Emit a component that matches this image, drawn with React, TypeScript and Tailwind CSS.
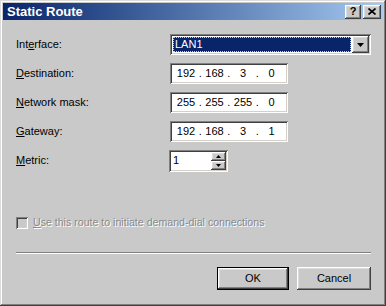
const raised =
  "shadow-[inset_-1px_-1px_#404040,inset_1px_1px_#ffffff,inset_-2px_-2px_#808080,inset_2px_2px_#dcdcdc]";
const sunken =
  "shadow-[inset_1px_1px_#808080,inset_-1px_-1px_#ffffff,inset_2px_2px_#404040,inset_-2px_-2px_#d4d0c8]";

function Label({ pre, u, post }: { pre?: string; u: string; post: string }) {
  return (
    <div className="w-[154px] shrink-0 text-[11px] text-black">
      {pre}
      <span className="underline underline-offset-[1px]">{u}</span>
      {post}
    </div>
  );
}

function IpField({ parts }: { parts: string[] }) {
  return (
    <div className={`flex items-center h-[21px] w-[118px] bg-white pl-[5px] text-[11px] ${sunken}`}>
      {parts.map((p, i) => (
        <div key={i} className="flex items-center">
          <span className="w-[22px] text-center">{p}</span>
          {i < 3 && <span className="w-[6.5px] text-center">.</span>}
        </div>
      ))}
    </div>
  );
}

function Arrow() {
  return (
    <svg width="7" height="4" viewBox="0 0 7 4">
      <path d="M0 0 L7 0 L3.5 4 Z" fill="#000" />
    </svg>
  );
}

export default function App() {
  return (
    <div
      className="w-[386px] h-[306px] bg-[#c9c9c9] p-[3px] flex flex-col shadow-[inset_-1px_-1px_#404040,inset_1px_1px_#dcdcdc,inset_-2px_-2px_#808080,inset_2px_2px_#ffffff]"
      style={{ fontFamily: '"Liberation Sans", Arial, sans-serif' }}
    >
      {/* title bar */}
      <div className="h-[17px] flex items-center bg-gradient-to-r from-[#0a246a] to-[#a6caf0] pl-[4px] pr-[2px]">
        <span className="text-white font-bold text-[13px] leading-none">Static Route</span>
        <div className="ml-auto flex items-center gap-[2px]">
          <div className={`w-[16px] h-[14px] bg-[#c9c9c9] flex items-center justify-center text-[11px] font-bold leading-none ${raised}`}>
            ?
          </div>
          <div className={`w-[18px] h-[14px] bg-[#c9c9c9] flex items-center justify-center ${raised}`}>
            <svg width="8" height="7" viewBox="0 0 8 7">
              <path d="M0.5 0.5 L7.5 6.5 M7.5 0.5 L0.5 6.5" stroke="#000" strokeWidth="1.6" />
            </svg>
          </div>
        </div>
      </div>

      {/* body */}
      <div className="flex-1 flex flex-col pl-[13px] pr-[12px] pt-[14px]">
        <div className="flex flex-col gap-[8px]">
          <div className="flex items-center h-[21px]">
            <Label pre="Int" u="e" post="rface:" />
            <div className={`flex items-center h-[21px] w-[202px] bg-white p-[2px] ${sunken}`}>
              <div className="flex-1 h-[17px] px-[1px] py-[1px]">
                <div className="h-full bg-[#0a246a] border border-dotted border-[#d8d880] flex items-center pl-[1px] text-white text-[11px]">
                  LAN1
                </div>
              </div>
              <div className={`w-[17px] h-[17px] bg-[#c9c9c9] flex items-center justify-center ${raised}`}>
                <Arrow />
              </div>
            </div>
          </div>
          <div className="flex items-center h-[21px]">
            <Label u="D" post="estination:" />
            <IpField parts={["192", "168", "3", "0"]} />
          </div>
          <div className="flex items-center h-[21px]">
            <Label u="N" post="etwork mask:" />
            <IpField parts={["255", "255", "255", "0"]} />
          </div>
          <div className="flex items-center h-[21px]">
            <Label u="G" post="ateway:" />
            <IpField parts={["192", "168", "3", "1"]} />
          </div>
          <div className="flex items-center h-[21px]">
            <Label u="M" post="etric:" />
            <div className={`flex items-center h-[22px] w-[59px] -ml-[1px] bg-white p-[2px] ${sunken}`}>
              <span className="flex-1 pl-[2px] text-[11px]">1</span>
              <div className="flex flex-col w-[15px] h-[18px]">
                <div className={`flex-1 bg-[#c9c9c9] flex items-center justify-center ${raised}`}>
                  <svg width="5" height="3" viewBox="0 0 5 3">
                    <path d="M2.5 0 L5 3 L0 3 Z" fill="#000" />
                  </svg>
                </div>
                <div className={`flex-1 bg-[#c9c9c9] flex items-center justify-center ${raised}`}>
                  <svg width="5" height="3" viewBox="0 0 5 3">
                    <path d="M0 0 L5 0 L2.5 3 Z" fill="#000" />
                  </svg>
                </div>
              </div>
            </div>
          </div>
        </div>

        {/* checkbox */}
        <div className="flex items-center mt-[45px] h-[13px]">
          <div className={`w-[12px] h-[12px] bg-[#c9c9c9] ${sunken}`} />
          <span className="ml-[5px] text-[10.6px] text-[#8a8a8a] [text-shadow:1px_1px_0_#ffffff]">
            <span className="underline underline-offset-[1px]">U</span>se this route to initiate demand-dial connections
          </span>
        </div>

        {/* separator */}
        <div className="mt-[23px] h-[2px] border-t border-[#808080] border-b border-b-white" />

        {/* buttons */}
        <div className="mt-[13px] flex justify-end gap-[8px]">
          <div className="w-[72px] h-[23px] border border-black">
            <div className={`w-full h-full bg-[#c9c9c9] flex items-center justify-center text-[11px] ${raised}`}>
              OK
            </div>
          </div>
          <div className={`w-[74px] h-[23px] bg-[#c9c9c9] flex items-center justify-center text-[11px] ${raised}`}>
            Cancel
          </div>
        </div>
      </div>
    </div>
  );
}
